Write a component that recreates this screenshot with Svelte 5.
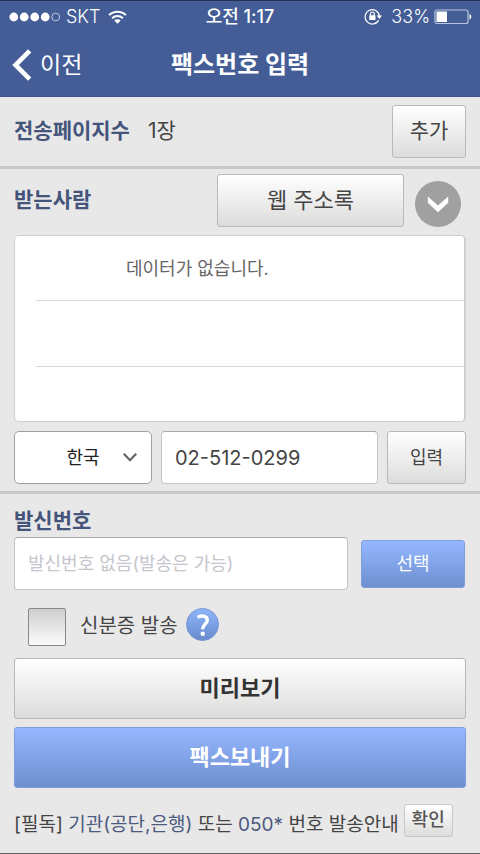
<script>
  let faxNumber = $state('02-512-0299');
  let country = $state('한국');
  let sender = $state('');
  let sendId = $state(false);
  const pageCount = 1;
</script>

<div class="screen">
  <header>
    <div class="status">
      <div class="side">
        <svg width="52" height="12" viewBox="0 0 52 12" aria-hidden="true">
          <g fill="#fff">
            <circle cx="5.800" cy="6" r="4.400" />
            <circle cx="16.200" cy="6" r="4.400" />
            <circle cx="26.700" cy="6" r="4.400" />
            <circle cx="37.200" cy="6" r="4.400" />
          </g>
          <circle cx="47.700" cy="6" r="3.900" fill="none" stroke="#c9d2e6" stroke-width="0.9" />
        </svg>
        <span>SKT</span>
        <svg class="wifi" width="19" height="14" viewBox="0 0 19 14" aria-hidden="true">
          <g fill="none" stroke="#fff" stroke-width="2">
            <path d="M1.100 5.100a12 12 0 0 1 16.800 0" />
            <path d="M4.100 8.200a7.700 7.700 0 0 1 10.800 0" />
          </g>
          <path d="M6.300 10.600a4.500 4.500 0 0 1 6.400 0L9.500 13.800z" fill="#fff" />
        </svg>
      </div>
      <span class="time">오전 1:17</span>
      <div class="side right">
        <svg class="lock" width="19" height="17" viewBox="0 0 19 17" aria-hidden="true">
          <path d="M14.600 12.400A7.200 7.200 0 1 1 15.500 8.200" fill="none" stroke="#fff" stroke-width="1.200" />
          <path d="M12.700 7.600h5.400l-2.700 3.400z" fill="#fff" />
          <rect x="5.300" y="7.300" width="6.200" height="4.700" rx=".5" fill="#fff" />
          <path d="M6.500 7.500V5.900a1.900 1.900 0 0 1 3.800 0v1.600" fill="none" stroke="#fff" stroke-width="1.200" />
        </svg>
        <span>33%</span>
        <svg width="38" height="16" viewBox="0 0 38 16" aria-hidden="true">
          <rect x="1" y="1" width="33" height="13.500" rx="2" fill="none" stroke="#b9c5de" stroke-width="1.200" />
          <rect x="2.500" y="2.500" width="10.500" height="10.500" fill="#fff" />
          <path d="M35.500 5v5.500c1.400-.6 1.800-1.500 1.800-2.750S36.900 5.600 35.500 5z" fill="#fff" />
        </svg>
      </div>
    </div>
    <nav>
      <a class="back" href="#back">
        <svg width="20" height="32" viewBox="0 0 20 32" aria-hidden="true">
          <path d="M17.700 1.800L3.500 16l14.200 14.200" fill="none" stroke="#fff" stroke-width="4.600" />
        </svg>
        <span>이전</span>
      </a>
      <h1>팩스번호 입력</h1>
    </nav>
  </header>

  <main>
    <section class="pages">
      <h2>전송페이지수</h2>
      <span class="count">{pageCount}장</span>
      <button type="button" class="grey add">추가</button>
    </section>

    <section class="receiver">
      <div class="top">
        <h2>받는사람</h2>
        <button type="button" class="grey book">웹 주소록</button>
        <button type="button" class="round" aria-label="펼치기">
          <svg width="46" height="46" viewBox="0 0 46 46" aria-hidden="true">
            <circle cx="23" cy="23" r="23" fill="#a0a0a0" />
            <path d="M12.800 15.400L23 24.600l10.200-9.200v6.300L23 31.300l-10.200-9.600z" fill="#fff" />
          </svg>
        </button>
      </div>
      <ul>
        <li>데이터가 없습니다.</li>
        <li></li>
        <li></li>
      </ul>
      <div class="number">
        <div class="country">
          <select aria-label="국가" bind:value={country}>
            <option>한국</option>
          </select>
          <svg width="16" height="11" viewBox="0 0 16 11" aria-hidden="true">
            <path d="M1.800 1.800L8 8.200l6.200-6.400" fill="none" stroke="#666" stroke-width="2.300" />
          </svg>
        </div>
        <input class="field fax" type="tel" aria-label="팩스번호" bind:value={faxNumber} />
        <button type="button" class="grey enter">입력</button>
      </div>
    </section>

    <section class="sender">
      <h2><label for="sender">발신번호</label></h2>
      <div class="row">
        <input id="sender" class="field" type="tel" placeholder="발신번호 없음(발송은 가능)" bind:value={sender} />
        <button type="button" class="blue choose">선택</button>
      </div>
      <div class="option">
        <label><input type="checkbox" bind:checked={sendId} /><span>신분증 발송</span></label>
        <button type="button" class="round" aria-label="도움말">
          <svg width="33" height="33" viewBox="0 0 33 33" aria-hidden="true">
            <defs>
              <linearGradient id="help" x1="0" y1="0" x2="0" y2="1">
                <stop offset="0" stop-color="#92b6fc" />
                <stop offset="1" stop-color="#668acb" />
              </linearGradient>
            </defs>
            <circle cx="16.500" cy="16.500" r="16" fill="url(#help)" stroke="#7496d4" />
            <path d="M11.600 9.300c3-2.200 9.700-1.900 9.700 2.700 0 4-4.700 4.300-4.700 9.300" fill="none" stroke="#fff" stroke-width="3.400" />
            <circle cx="16.700" cy="25.700" r="2.200" fill="#fff" />
          </svg>
        </button>
      </div>
      <button type="button" class="grey wide">미리보기</button>
      <button type="button" class="blue wide">팩스보내기</button>
      <div class="notice">
        <p>[필독] <em>기관(공단,은행)</em> 또는 <em>050*</em> 번호 발송안내</p>
        <button type="button" class="grey ok">확인</button>
      </div>
    </section>
  </main>
</div>

<style>
  :global(body) {
    margin: 0;
    background: #e8e8e8;
  }
  .screen, .screen * {
    box-sizing: border-box;
  }
  .screen {
    display: flex;
    flex-direction: column;
    min-height: 100vh;
    border-bottom: 1px solid #666;
    background: #e8e8e8;
    color: #444;
    font: 18px/24px Inter, 'Noto Sans CJK KR', sans-serif;
  }
  button, input, select {
    margin: 0;
    font: inherit;
    color: inherit;
  }
  h1, h2, p, ul {
    margin: 0;
    padding: 0;
  }
  header {
    height: 97px;
    border-top: 1px solid #253150;
    border-bottom: 1px solid #3c5489;
    background: #445d96;
    color: #fff;
  }
  .status {
    display: grid;
    grid-template-columns: 1fr auto 1fr;
    align-items: center;
    height: 31px;
    padding: 0 8px;
  }
  .side {
    display: flex;
    align-items: center;
    gap: 6px;
    font-weight: 300;
  }
  .wifi {
    margin-left: 2px;
  }
  .right {
    justify-content: flex-end;
    gap: 4px;
  }
  .lock {
    margin-right: 4px;
  }
  .time {
    font-weight: 500;
  }
  nav {
    display: grid;
    grid-template-columns: 1fr auto 1fr;
    align-items: center;
    height: 65px;
    padding: 0 12px;
  }
  .back {
    display: flex;
    align-items: center;
    gap: 8px;
    color: #fff;
    font-size: 23px;
    text-decoration: none;
  }
  h1 {
    font-size: 24px;
    font-weight: 700;
    line-height: 32px;
  }
  h2 {
    color: #44547a;
    font-size: 21px;
    font-weight: 700;
    line-height: 28px;
  }
  section {
    padding: 0 14px;
  }
  .pages {
    display: flex;
    align-items: center;
    height: 72px;
    border-bottom: 3px solid #c8c8c8;
  }
  .pages h2, .count {
    padding-bottom: 2px;
  }
  .count {
    flex: 1;
    margin-left: 18px;
    font-size: 21px;
  }
  .grey, .blue {
    display: flex;
    align-items: center;
    justify-content: center;
    padding: 0;
    border: 1px solid #b9b9b9;
    border-radius: 3px;
    background: linear-gradient(#fff, #dcdcdb);
    white-space: nowrap;
  }
  .blue {
    border-color: #7f9fdc;
    background: linear-gradient(#95b7ff, #6e8fcf);
    color: #fff;
  }
  .add {
    width: 74px;
    height: 53px;
    padding-bottom: 2px;
    font-size: 21px;
  }
  .receiver {
    padding-top: 5px;
    padding-bottom: 7px;
    border-bottom: 3px solid #c8c8c8;
  }
  .top {
    display: flex;
    gap: 11px;
  }
  .top h2 {
    flex: 1;
    padding-top: 12px;
  }
  .book {
    width: 187px;
    height: 53px;
    padding-bottom: 2px;
    font-size: 22px;
  }
  .round {
    display: flex;
    padding: 0;
    border: 0;
    border-radius: 50%;
    background: none;
  }
  .top .round {
    align-self: flex-end;
    margin-right: 5px;
  }
  ul {
    margin-top: 8px;
    padding: 0 0 0 21px;
    border: 1px solid #cfcfcf;
    border-right-width: 2px;
    border-radius: 5px;
    background: #fff;
    color: #666;
    list-style: none;
  }
  li {
    height: 66px;
    padding: 21px 0 0 90px;
    border-bottom: 1px solid #d6d6d6;
  }
  li:first-child {
    height: 65px;
  }
  li:last-child {
    height: 54px;
    border-bottom: 0;
  }
  .number {
    display: flex;
    gap: 9px;
    margin-top: 9px;
  }
  .country {
    display: grid;
    width: 138px;
  }
  .country > * {
    grid-area: 1 / 1;
  }
  .country svg {
    align-self: center;
    justify-self: end;
    margin-right: 14px;
    pointer-events: none;
  }
  select {
    width: 100%;
    height: 53px;
    padding: 0;
    border: 1px solid #a0a0a0;
    border-radius: 5px;
    background: #fff;
    color: #222;
    text-align: center;
    text-align-last: center;
    appearance: none;
  }
  .field {
    flex: 1;
    min-width: 0;
    height: 53px;
    padding: 0 13px;
    border: 1px solid #c4c4c4;
    border-top-color: #aaa;
    border-radius: 4px;
    background: #fff;
  }
  .fax {
    font-size: 20px;
  }
  .field::placeholder {
    color: #c5c5cd;
    opacity: 1;
  }
  .enter {
    width: 79px;
    height: 53px;
  }
  .sender {
    padding-top: 13px;
  }
  .row {
    display: flex;
    align-items: center;
    gap: 13px;
    margin-top: 2px;
    padding-right: 1px;
  }
  .choose {
    width: 104px;
    height: 48px;
  }
  .option {
    display: flex;
    gap: 8px;
    margin: 18px 0 12px;
    padding-left: 14px;
  }
  .option label {
    display: flex;
    gap: 14px;
    font-size: 20px;
    line-height: 36px;
  }
  input[type='checkbox'] {
    width: 38px;
    height: 38px;
    border: 1px solid #888;
    border-radius: 2px;
    background: linear-gradient(#cecece, #fbfbfb);
    appearance: none;
  }
  input[type='checkbox']:checked {
    box-shadow: inset 0 0 0 9px #6e8fcf;
  }
  .wide {
    width: 100%;
    height: 61px;
    margin-bottom: 8px;
    padding-bottom: 2px;
    color: #333;
    font-size: 22px;
    font-weight: 700;
  }
  .blue.wide {
    color: #fff;
  }
  .notice {
    display: flex;
    align-items: flex-end;
    gap: 5px;
    margin-top: 16px;
  }
  p {
    font-size: 19px;
    white-space: nowrap;
  }
  em {
    color: #4c5a80;
    font-style: normal;
  }
  .ok {
    width: 49px;
    height: 33px;
    padding-bottom: 2px;
    border-color: #c8c8c8;
    color: #555;
    font-weight: 500;
  }
</style>
